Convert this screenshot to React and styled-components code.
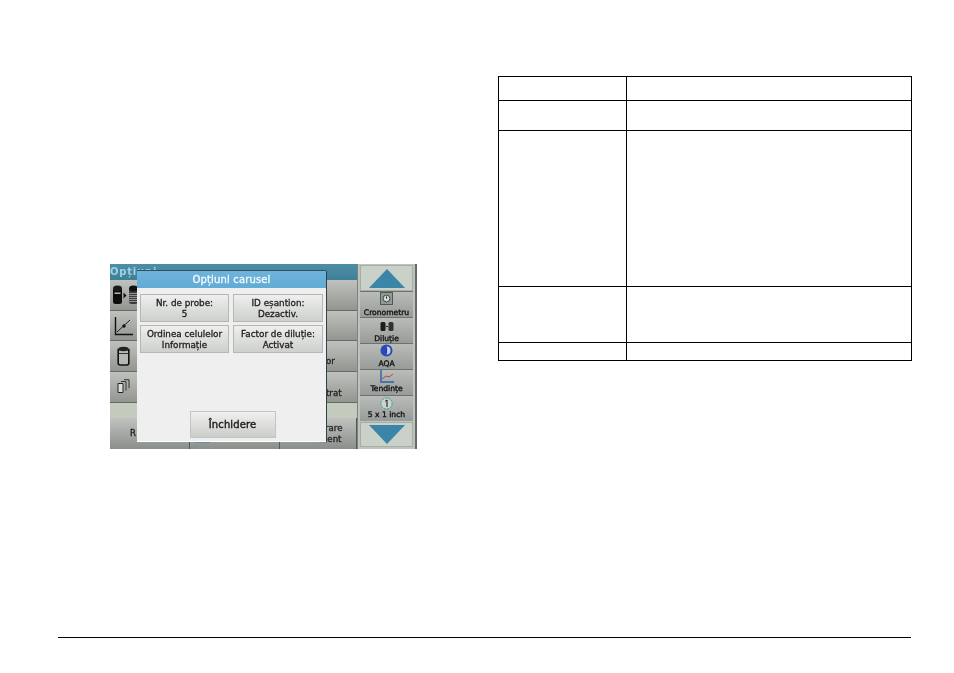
import React from "react";
import styled, { createGlobalStyle } from "styled-components";

const Global = createGlobalStyle`
  html, body { margin: 0; background: #fff; }
  body { font-family: "DejaVu Sans", sans-serif; }
`;

const Page = styled.div`
  width: 954px;
  height: 673px;
  box-sizing: border-box;
  padding: 76px 42px 0 58px;
  display: flex;
  flex-direction: column;
  overflow: hidden;
`;
const Columns = styled.div`
  display: flex;
  height: 561px;
`;
const LeftCol = styled.div`
  width: 441px;
  padding: 188px 0 0 52px;
  box-sizing: border-box;
`;
const Table = styled.div`
  width: 414px;
  display: grid;
  grid-template-columns: 128px 1fr;
  grid-template-rows: ${p => p.$rows};
  border-top: 1px solid #000;
  border-left: 1px solid #000;
  align-self: flex-start;
`;
const Cell = styled.div`
  border-right: 1px solid #000;
  border-bottom: 1px solid #000;
`;
const FooterRule = styled.div`
  width: 853px;
  height: 1px;
  background: #000;
`;

const Device = styled.div`
  position: relative;
  width: 307px;
  height: 185px;
  display: flex;
  background: #8f9491;
  overflow: hidden;
  filter: blur(0.4px);
`;
const Main = styled.div`
  width: 247px;
  display: flex;
  flex-direction: column;
`;
const Header = styled.div`
  height: 16px;
  background: linear-gradient(#4f8da6, #3f8099);
  color: #9fd2e6;
  font-size: 10px;
  font-weight: 700;
  line-height: 15px;
  letter-spacing: .8px;
`;
const Row = styled.div`
  height: ${p => p.$h}px;
  box-sizing: border-box;
  display: flex;
  align-items: center;
  border-bottom: 1px solid #666a68;
  background: linear-gradient(#bfc1be, #93968f);
  font-size: 8.6px;
  color: #222;
  -webkit-text-stroke: .3px #222;
`;
const RowIcon = styled.div`
  width: 27px;
  display: flex;
  justify-content: ${p => p.$justify || "center"};
  align-items: center;
  padding-left: ${p => p.$pl || 0}px;
  box-sizing: border-box;
  margin-top: ${p => p.$mt || 0}px;
`;
const RowLabel = styled.div`
  margin-left: auto;
  width: 31px;
  padding-top: ${p => p.$pt || 0}px;
  line-height: 11px;
`;
const ClippedLine = styled.span`
  display: block;
  margin-left: -6px;
`;
const PaleBand = styled.div`
  height: 15px;
  background: #c3cbbf;
`;
const BottomRow = styled.div`
  flex: 1;
  display: grid;
  grid-template-columns: 80px 90px 77px;
`;
const BottomCell = styled.div`
  position: relative;
  background: linear-gradient(#c0c3bf, #8b8f8b);
  border-right: 1px solid #55595a;
  font-size: 8.6px;
  color: #222;
  -webkit-text-stroke: .3px #222;
  line-height: 11px;
  display: flex;
  align-items: ${p => p.$align || "center"};
  justify-content: ${p => p.$justify || "center"};
  padding: ${p => p.$pad || 0};
`;
const DateMark = styled.span`
  position: absolute;
  left: 5px;
  top: 24px;
  width: 15px;
  height: 1px;
  background: #6c8aa8;
`;
const Sidebar = styled.div`
  width: 60px;
  box-sizing: border-box;
  background: #bec4bc;
  border-left: 1px solid #7c8280;
  border-right: 2px solid #666b6a;
  padding: 1px 2px;
  display: flex;
  flex-direction: column;
  gap: 1px;
`;
const ArrowBtn = styled.div`
  height: ${p => p.$h}px;
  background: #c9d1c8;
  border: 1px solid #a7aea6;
  box-sizing: border-box;
  display: flex;
  align-items: center;
  justify-content: center;
`;
const SideBtn = styled.div`
  height: 25px;
  background: linear-gradient(#b9bcb9, #989c99);
  box-shadow: 0 -1px 0 #6d7170;
  display: flex;
  flex-direction: column;
  align-items: center;
  justify-content: space-between;
  font-size: 7.6px;
  color: #111;
  -webkit-text-stroke: .35px #111;
  line-height: 9px;
  padding-top: ${p => p.$pt || 0}px;
  padding-bottom: ${p => p.$pb || 0}px;
  box-sizing: border-box;
`;
const Dialog = styled.div`
  position: absolute;
  left: 27px;
  top: 7px;
  width: 189px;
  height: 170px;
  background: #efefef;
  box-shadow: 0 1px 0 #fff, 1px 0 0 #30404a, 0 -1px 0 #30505f;
  display: flex;
  flex-direction: column;
`;
const DialogTitle = styled.div`
  height: 17px;
  background: linear-gradient(#6eb3da, #62abd6);
  color: #f4fafd;
  font-size: 10px;
  letter-spacing: .15px;
  -webkit-text-stroke: .3px #f4fafd;
  text-align: center;
  line-height: 17px;
`;
const DialogGrid = styled.div`
  display: grid;
  grid-template-columns: 89px 90px;
  grid-auto-rows: 28px;
  gap: 3px 4px;
  padding: 6px 3px 0 3px;
`;
const OptBtn = styled.div`
  background: linear-gradient(#efefed, #cdd0cc);
  border: 1px solid #b4b7b3;
  box-sizing: border-box;
  padding-top: 1px;
  font-size: 8.8px;
  line-height: 11px;
  color: #222;
  -webkit-text-stroke: .3px #222;
  text-align: center;
  display: flex;
  flex-direction: column;
  justify-content: center;
`;
const DialogFoot = styled.div`
  margin-top: auto;
  display: flex;
  justify-content: center;
  padding: 0 0 3px 2px;
`;
const CloseBtn = styled.div`
  width: 86px;
  height: 27px;
  background: linear-gradient(#f0f0ee, #cacdc9);
  border: 1px solid #c2c5c1;
  box-sizing: border-box;
  font-size: 10px;
  letter-spacing: .1px;
  color: #1c1c1c;
  -webkit-text-stroke: .4px #1c1c1c;
  text-align: center;
  line-height: 25px;
`;

const Bottles = () => (
  <svg width="25" height="20" viewBox="0 0 25 20" style={{ flexShrink: 0 }}>
    <path d="M0 4h9v13a2.500 2 0 0 1-2.500 2h-4A2.500 2 0 0 1 0 17z" fill="#0e0e0e" />
    <ellipse cx="4.500" cy="3.500" rx="4.500" ry="3" fill="#1b1b1b" />
    <path d="M1.500 7.500h6v1.400h-6z" fill="#c8c8c8" />
    <path d="M10.500 7.500l3 3-3 3z" fill="#111" />
    <path d="M16 4h9v13a2.500 2 0 0 1-2.500 2h-4a2.500 2 0 0 1-2.500-2z" fill="#3c3c3c" />
    <ellipse cx="20.500" cy="3.500" rx="4.500" ry="3" fill="#111" />
    <path d="M16 8.500h9M16 10.500h9M16 12.500h9M16 14.500h9M16 16.500h9" stroke="#9a9a9a" strokeWidth=".9" />
  </svg>
);
const Graph = () => (
  <svg width="20" height="20" viewBox="0 0 20 20">
    <path d="M1.500 1v17.500H19" fill="none" stroke="#111" strokeWidth="1.400" />
    <path d="M3 16L16 4" stroke="#222" strokeWidth="1" />
    <circle cx="10" cy="10" r="1.700" fill="#111" />
  </svg>
);
const Bottle = () => (
  <svg width="13" height="20" viewBox="0 0 13 20">
    <path d="M1.200 3.500h10.600V17a2 2 0 0 1-2 2H3.200a2 2 0 0 1-2-2z" fill="#b5b8b5" stroke="#111" strokeWidth="1.600" />
    <ellipse cx="6.500" cy="3" rx="5" ry="2.200" fill="#222" />
    <path d="M1.500 7.500h10" stroke="#333" />
  </svg>
);
const Pages = () => (
  <svg width="13" height="14" viewBox="0 0 13 14">
    <path d="M1 4.500h5v9H1z" fill="#ddd" stroke="#222" />
    <path d="M4 2.500h5v9" fill="none" stroke="#333" />
    <path d="M7 .7h5v8.500" fill="none" stroke="#333" />
  </svg>
);
const Up = () => (
  <svg width="36" height="19" viewBox="0 0 36 19"><path d="M18 0L36 19H0z" fill="#3a85a8" /></svg>
);
const Down = () => (
  <svg width="36" height="19" viewBox="0 0 36 19"><path d="M18 19L36 0H0z" fill="#3a85a8" /></svg>
);
const Timer = () => (
  <svg width="13" height="13" viewBox="0 0 13 13">
    <rect x=".5" y=".5" width="12" height="12" fill="#8d9b99" stroke="#555" />
    <circle cx="6.500" cy="6.500" r="3.400" fill="#d5d8d6" stroke="#444" />
    <path d="M6.500 4.500v2" stroke="#111" />
  </svg>
);
const Dilution = () => (
  <svg width="14" height="11" viewBox="0 0 14 11">
    <rect x="0.500" y="1" width="5" height="9" rx="1.500" fill="#1c1c1c" />
    <rect x="8.500" y="1" width="5" height="9" rx="1.500" fill="#333" />
    <path d="M6 5.500h2" stroke="#222" />
  </svg>
);
const Aqa = () => (
  <svg width="13" height="13" viewBox="0 0 13 13">
    <circle cx="6.500" cy="6.500" r="6" fill="#2849b8" />
    <path d="M6.500 2.500a4 4 0 0 1 0 8z" fill="#c9d0ea" />
    <path d="M6.500 3.500v6" stroke="#223a9c" strokeWidth="1.200" />
  </svg>
);
const Trend = () => (
  <svg width="14" height="13" viewBox="0 0 14 13">
    <path d="M1 0v12h13" fill="none" stroke="#2a62a8" strokeWidth="1.400" />
    <path d="M2 9l4-3 3 1 4-3" fill="none" stroke="#c0404a" />
  </svg>
);
const One = () => (
  <svg width="13" height="13" viewBox="0 0 13 13">
    <circle cx="6.500" cy="6.500" r="5.600" fill="#c9d4cf" stroke="#2a9a9a" strokeWidth="1" strokeDasharray="2 1" />
    <path d="M5.200 4.200L7 3v7" fill="none" stroke="#111" />
  </svg>
);

export default function App() {
  return (
    <Page>
      <Global />
      <Columns>
        <LeftCol>
          <Device>
            <Main>
              <Header>Opțiuni</Header>
              <Row $h={31}><RowIcon $justify="flex-start" $pl={3}><Bottles /></RowIcon></Row>
              <Row $h={30}><RowIcon><Graph /></RowIcon></Row>
              <Row $h={31}><RowIcon><Bottle /></RowIcon><RowLabel $pt={10}>or</RowLabel></Row>
              <Row $h={31}><RowIcon $mt={-2}><Pages /></RowIcon><RowLabel $pt={12}>trat</RowLabel></Row>
              <PaleBand />
              <BottomRow>
                <BottomCell $justify="flex-end" $pad="0 53px 0 0">R</BottomCell>
                <BottomCell><DateMark /></BottomCell>
                <BottomCell $justify="flex-end">
                  <RowLabel>rare<ClippedLine>ment</ClippedLine></RowLabel>
                </BottomCell>
              </BottomRow>
            </Main>
            <Sidebar>
              <ArrowBtn $h={26}><Up /></ArrowBtn>
              <SideBtn $pb={0}><Timer />Cronometru</SideBtn>
              <SideBtn $pb={0} $pt={3}><Dilution />Diluție</SideBtn>
              <SideBtn $pb={1}><Aqa />AQA</SideBtn>
              <SideBtn $pb={2}><Trend />Tendințe</SideBtn>
              <SideBtn $pb={2} $pt={1}><One />5 x 1 inch</SideBtn>
              <ArrowBtn $h={25}><Down /></ArrowBtn>
            </Sidebar>
            <Dialog>
              <DialogTitle>Opțiuni carusel</DialogTitle>
              <DialogGrid>
                <OptBtn><span>Nr. de probe:</span><span>5</span></OptBtn>
                <OptBtn><span>ID eșantion:</span><span>Dezactiv.</span></OptBtn>
                <OptBtn><span>Ordinea celulelor</span><span>Informație</span></OptBtn>
                <OptBtn><span>Factor de diluție:</span><span>Activat</span></OptBtn>
              </DialogGrid>
              <DialogFoot><CloseBtn>Închidere</CloseBtn></DialogFoot>
            </Dialog>
          </Device>
        </LeftCol>
        <Table $rows="24px 30px 156px 56px 18px">
          <Cell /><Cell />
          <Cell /><Cell />
          <Cell /><Cell />
          <Cell /><Cell />
          <Cell /><Cell />
        </Table>
      </Columns>
      <FooterRule />
    </Page>
  );
}
